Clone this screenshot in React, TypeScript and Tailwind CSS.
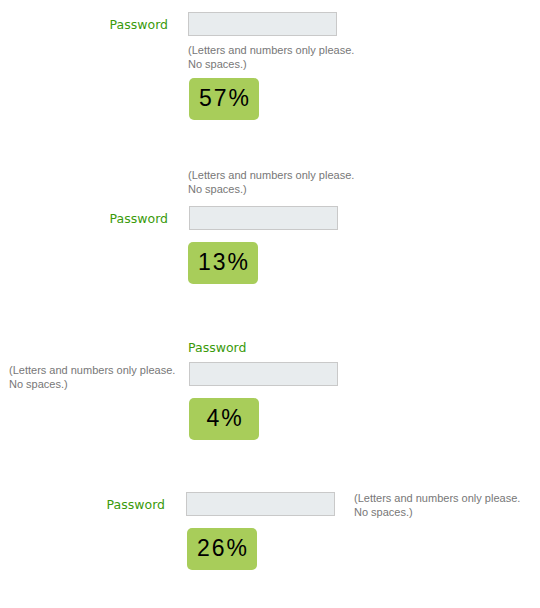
import React from "react";

const labelCls =
  "text-[12.5px] leading-[16px] text-[#3a9a0a] font-['DejaVu_Sans',sans-serif]";
const hintCls =
  "text-[11px] leading-[14px] text-[#777777] font-['Liberation_Sans',Arial,sans-serif]";
const inputCls =
  "block w-[149px] h-[24px] bg-[#e8ecee] border border-[#c9c9c9] outline-none";

function Badge({ value, ml }: { value: string; ml: string }) {
  return (
    <div
      className={`${ml} w-[70px] h-[42px] rounded-[5px] bg-[#a8cd5a] flex items-center justify-center text-[23px] tracking-[2px] text-black font-['Liberation_Sans',Arial,sans-serif]`}
    >
      <span className="pl-[2px] -mt-[2px]">{value}</span>
    </div>
  );
}

function Hint() {
  return (
    <div className={hintCls}>
      (Letters and numbers only please.
      <br />
      No spaces.)
    </div>
  );
}

export default function App() {
  return (
    <div className="w-[540px] h-[608px] bg-white relative overflow-hidden">
      {/* Section 1 */}
      <div className="pt-[12px]">
        <div className="flex items-center">
          <div className={`w-[168px] text-right pt-[1px] ${labelCls}`}>Password</div>
          <input className={`ml-[20px] ${inputCls}`} />
        </div>
        <div className="ml-[188px] mt-[7px]">
          <Hint />
        </div>
        <div className="mt-[7px]">
          <Badge value="57%" ml="ml-[189px]" />
        </div>
      </div>

      {/* Section 2 */}
      <div className="mt-[48px]">
        <div className="ml-[188px]">
          <Hint />
        </div>
        <div className="flex items-center mt-[10px]">
          <div className={`w-[168px] text-right pt-[1px] ${labelCls}`}>Password</div>
          <input className={`ml-[21px] ${inputCls}`} />
        </div>
        <div className="mt-[12px]">
          <Badge value="13%" ml="ml-[188px]" />
        </div>
      </div>

      {/* Section 3 */}
      <div className="mt-[56px]">
        <div className={`ml-[188px] ${labelCls}`}>Password</div>
        <div className="flex items-start mt-[6px] h-[24px]">
          <div className="w-[180px] pl-[9px] pt-[1px]">
            <Hint />
          </div>
          <input className={`ml-[9px] ${inputCls}`} />
        </div>
        <div className="mt-[12px]">
          <Badge value="4%" ml="ml-[189px]" />
        </div>
      </div>

      {/* Section 4 */}
      <div className="mt-[52px]">
        <div className="flex items-center h-[24px]">
          <div className={`w-[165px] text-right pt-[1px] ${labelCls}`}>Password</div>
          <input className={`ml-[21px] ${inputCls}`} />
          <div className="ml-[19px] self-start -mt-[1px]">
            <Hint />
          </div>
        </div>
        <div className="mt-[12px]">
          <Badge value="26%" ml="ml-[187px]" />
        </div>
      </div>
    </div>
  );
}
